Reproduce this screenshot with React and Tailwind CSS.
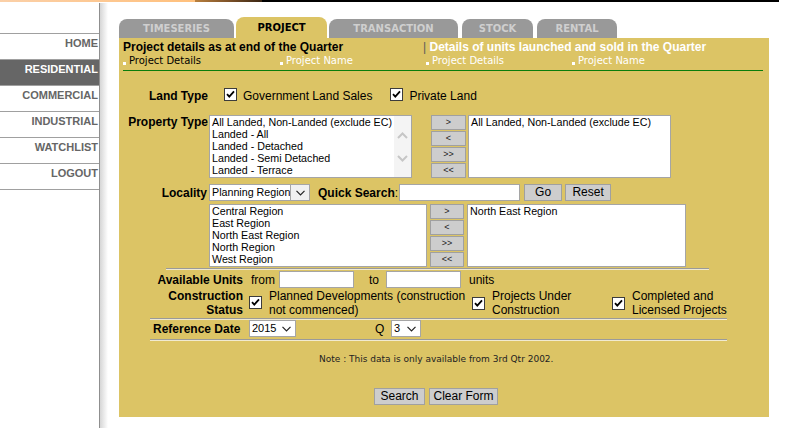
import React from 'react'

const arial = "font-['Liberation_Sans',Arial,sans-serif]"
const verdana = "font-['DejaVu_Sans',Verdana,sans-serif]"

const menu = ['HOME', 'RESIDENTIAL', 'COMMERCIAL', 'INDUSTRIAL', 'WATCHLIST', 'LOGOUT']

const tabs = [
  { label: 'TIMESERIES', cls: 'w-[115px]' },
  { label: 'PROJECT', cls: 'w-[91px] ml-[2px]', active: true },
  { label: 'TRANSACTION', cls: 'w-[129px] ml-[2px]' },
  { label: 'STOCK', cls: 'w-[71px] ml-[4px]' },
  { label: 'RENTAL', cls: 'w-[80px] ml-[4px]' },
]

const Check = () => (
  <span className="inline-flex w-[13px] h-[13px] shrink-0 items-center justify-center border border-[#3c3c3c] bg-white">
    <svg width="11" height="11" viewBox="0 0 11 11">
      <path d="M2 5.2 L4.3 7.6 L9 2.4" fill="none" stroke="#000" strokeWidth="1.8" />
    </svg>
  </span>
)

const Chevron = ({ color = '#222' }) => (
  <svg width="9" height="6" viewBox="0 0 9 6">
    <path d="M0.5 0.8 L4.5 4.8 L8.5 0.8" fill="none" stroke={color} strokeWidth="1.2" />
  </svg>
)

const Bullet = () => <span className="inline-block w-[3px] h-[3px] bg-white mr-[3px] mb-[3px]" />

const MoveButtons = ({ w }) => (
  <div className={`flex flex-col gap-px ${w}`}>
    {['>', '<', '>>', '<<'].map((s) => (
      <div key={s} className="h-[15px] bg-[#cdcdcd] border border-[#a0a0a0] text-[9px] leading-[13px] text-center text-[#222]">
        {s}
      </div>
    ))}
  </div>
)

const Listbox = ({ w, items }) => (
  <div className={`${w} h-[63px] bg-white border border-[#a5a5a5] text-[10.7px] leading-[12px] pl-[2px] text-black whitespace-nowrap overflow-hidden`}>
    {items.map((t) => (
      <div key={t}>{t}</div>
    ))}
  </div>
)

const Input = ({ w }) => <div className={`${w} h-[17px] bg-white border border-[#a5a5a5]`} />

const Btn = ({ w, children }) => (
  <div className={`${w} h-[17px] bg-[#cdcdcd] border border-[#a0a0a0] text-[12px] leading-[15px] text-center text-black whitespace-nowrap`}>
    {children}
  </div>
)

const Hr = ({ cls }) => <div className={`h-[2px] border-t border-[#9a9a9a] border-b border-b-[#f1ead0] ${cls}`} />

export default function App() {
  return (
    <div className={`w-[787px] h-[428px] bg-white overflow-hidden ${arial}`}>
      <div className="flex h-[2px] w-[779px]">
        <div className="w-[195px] bg-gradient-to-r from-[#fbd0a8] to-[#ffc07c]" />
        <div className="w-[67px] bg-gradient-to-r from-[#b9803e] via-[#7e5228] to-[#3a2614]" />
        <div className="flex-1 bg-black" />
      </div>

      <div className="flex h-[426px]">
        <aside className="w-[100px] mt-px pt-[30px] border-r border-[#8f8f8f]">
          {menu.map((m, i) => (
            <div
              key={m}
              className={`border-t border-[#a0a0a0] text-right pr-[1px] text-[11px] font-bold leading-[18px] ${
                i === menu.length - 1 ? 'h-[27px] border-b' : 'h-[26px]'
              } ${m === 'RESIDENTIAL' ? 'bg-[#666666] text-white' : 'text-[#666666]'}`}
            >
              {m}
            </div>
          ))}
        </aside>
        <div className="w-[8px] mt-px bg-gradient-to-r from-[#d6d6d6] to-white" />

        <main className="pl-[11px]">
          <div className={`flex items-end h-[21px] mt-[15px] ${verdana} text-[10px] font-bold`}>
            {tabs.map((t) => (
              <div
                key={t.label}
                className={`${t.cls} rounded-t-[8px] text-center ${
                  t.active ? 'h-[21px] leading-[21px] bg-[#dcc465] text-black' : 'h-[19px] leading-[19px] bg-[#999999] text-[#cfcfcf]'
                }`}
              >
                {t.label}
              </div>
            ))}
          </div>

          <div className="w-[650px] h-[379px] bg-[#dcc465] pt-[2px] text-[12px] text-black">
            {/* header */}
            <div className="flex pl-[4px] font-bold leading-[14px]">
              <span className="w-[300px]">Project details as at end of the Quarter</span>
              <span>
                <span className="text-[#5a5a5a] font-normal">|</span> <span className="text-white">Details of units launched and sold in the Quarter</span>
              </span>
            </div>
            <div className={`flex pl-[4px] ${verdana} text-[10px] leading-[14px] text-white`}>
              <div className="w-[157px] flex items-end"><Bullet /><span className="text-black">Project Details</span></div>
              <div className="w-[146px] flex items-end"><Bullet />Project Name</div>
              <div className="w-[146px] flex items-end"><Bullet />Project Details</div>
              <div className="flex items-end"><Bullet />Project Name</div>
            </div>
            <div className="h-px bg-[#0b7d0b] ml-[4px] mr-[6px] mt-[2px]" />

            {/* land type */}
            <div className="flex items-center mt-[18px] h-[14px]">
              <div className="w-[89px] text-right font-bold">Land Type</div>
              <div className="ml-[16px]"><Check /></div>
              <span className="ml-[6px]">Government Land Sales</span>
              <div className="ml-[18px]"><Check /></div>
              <span className="ml-[6px]">Private Land</span>
            </div>

            {/* property type */}
            <div className="flex mt-[12px]">
              <div className="w-[89px] text-right font-bold leading-[14px]">Property Type</div>
              <div className="ml-[1px] w-[203px] h-[63px] bg-white border border-[#a5a5a5] flex text-[10.7px] leading-[12px] whitespace-nowrap">
                <div className="flex-1 pl-[2px] overflow-hidden">
                  <div>All Landed, Non-Landed (exclude EC)</div>
                  <div>Landed - All</div>
                  <div>Landed - Detached</div>
                  <div>Landed - Semi Detached</div>
                  <div>Landed - Terrace</div>
                </div>
                <div className="w-[17px] bg-[#f4f4f4] flex flex-col items-center pt-[16px] gap-[16px]">
                  <svg width="11" height="7" viewBox="0 0 11 7"><path d="M1 6 L5.5 1.5 L10 6" fill="none" stroke="#c6c6c6" strokeWidth="2" /></svg>
                  <svg width="11" height="7" viewBox="0 0 11 7"><path d="M1 1 L5.5 5.5 L10 1" fill="none" stroke="#c6c6c6" strokeWidth="2" /></svg>
                </div>
              </div>
              <div className="ml-[19px]"><MoveButtons w="w-[35px]" /></div>
              <div className="ml-[2px]"><Listbox w="w-[203px]" items={['All Landed, Non-Landed (exclude EC)']} /></div>
            </div>

            {/* locality */}
            <div className="flex items-center mt-[6px] h-[17px]">
              <div className="w-[88px] text-right font-bold">Locality</div>
              <div className="ml-[2px] w-[101px] h-[17px] bg-white border border-[#a5a5a5] flex text-[10.7px] leading-[15px] whitespace-nowrap">
                <span className="flex-1 pl-[2px] overflow-hidden">Planning Region</span>
                <span className="w-[19px] shrink-0 border-l border-[#a5a5a5] bg-[#f0f0f0] flex items-center justify-center"><Chevron /></span>
              </div>
              <span className="ml-[8px] font-bold">Quick Search<span className="font-normal">:</span></span>
              <div className="ml-[1px]"><Input w="w-[121px]" /></div>
              <div className="ml-[4px]"><Btn w="w-[38px]">Go</Btn></div>
              <div className="ml-[3px]"><Btn w="w-[46px]">Reset</Btn></div>
            </div>

            <div className="flex mt-[3px] ml-[90px]">
              <Listbox w="w-[218px]" items={['Central Region', 'East Region', 'North East Region', 'North Region', 'West Region']} />
              <div className="ml-[3px]"><MoveButtons w="w-[34px]" /></div>
              <div className="ml-[3px]"><Listbox w="w-[219px]" items={['North East Region']} /></div>
            </div>

            <Hr cls="mt-px ml-[47px] w-[543px]" />

            {/* available units */}
            <div className="flex items-center mt-px h-[17px]">
              <div className="w-[124px] text-right font-bold">Available Units</div>
              <span className="ml-[8px] w-[28px]">from</span>
              <Input w="w-[75px]" />
              <span className="ml-[15px] w-[17px]">to</span>
              <Input w="w-[75px]" />
              <span className="ml-[8px]">units</span>
            </div>

            {/* construction status */}
            <div className="flex items-center mt-px h-[28px] leading-[14px]">
              <div className="w-[124px] text-right font-bold">Construction<br />Status</div>
              <div className="ml-[6px]"><Check /></div>
              <div className="ml-[7px] w-[203px]">Planned Developments (construction<br />not commenced)</div>
              <Check />
              <div className="ml-[7px] w-[120px]">Projects Under<br />Construction</div>
              <Check />
              <div className="ml-[7px]">Completed and<br />Licensed Projects</div>
            </div>

            <Hr cls="mt-px ml-[31px] w-[577px]" />

            {/* reference date */}
            <div className="flex items-center h-[17px]">
              <div className="ml-[34px] w-[96px] font-bold">Reference Date</div>
              <div className="w-[47px] h-[17px] bg-white border border-[#a5a5a5] flex items-center text-[11px] pl-[2px]">
                <span className="flex-1">2015</span>
                <span className="pr-[4px] flex"><Chevron /></span>
              </div>
              <span className="ml-[79px] w-[16px]">Q</span>
              <div className="w-[30px] h-[17px] bg-white border border-[#a5a5a5] flex items-center text-[11px] pl-[2px]">
                <span className="flex-1">3</span>
                <span className="pr-[4px] flex"><Chevron /></span>
              </div>
            </div>

            <Hr cls="mt-[2px] ml-[31px] w-[577px]" />

            <div className={`ml-[200px] mt-[13px] ${verdana} text-[9px] leading-[11px] text-[#222]`}>
              Note : This data is only available from 3rd Qtr 2002.
            </div>

            <div className="flex ml-[255px] mt-[23px]">
              <Btn w="w-[51px]">Search</Btn>
              <div className="ml-[4px]"><Btn w="w-[69px]">Clear Form</Btn></div>
            </div>
          </div>
        </main>
      </div>
    </div>
  )
}
